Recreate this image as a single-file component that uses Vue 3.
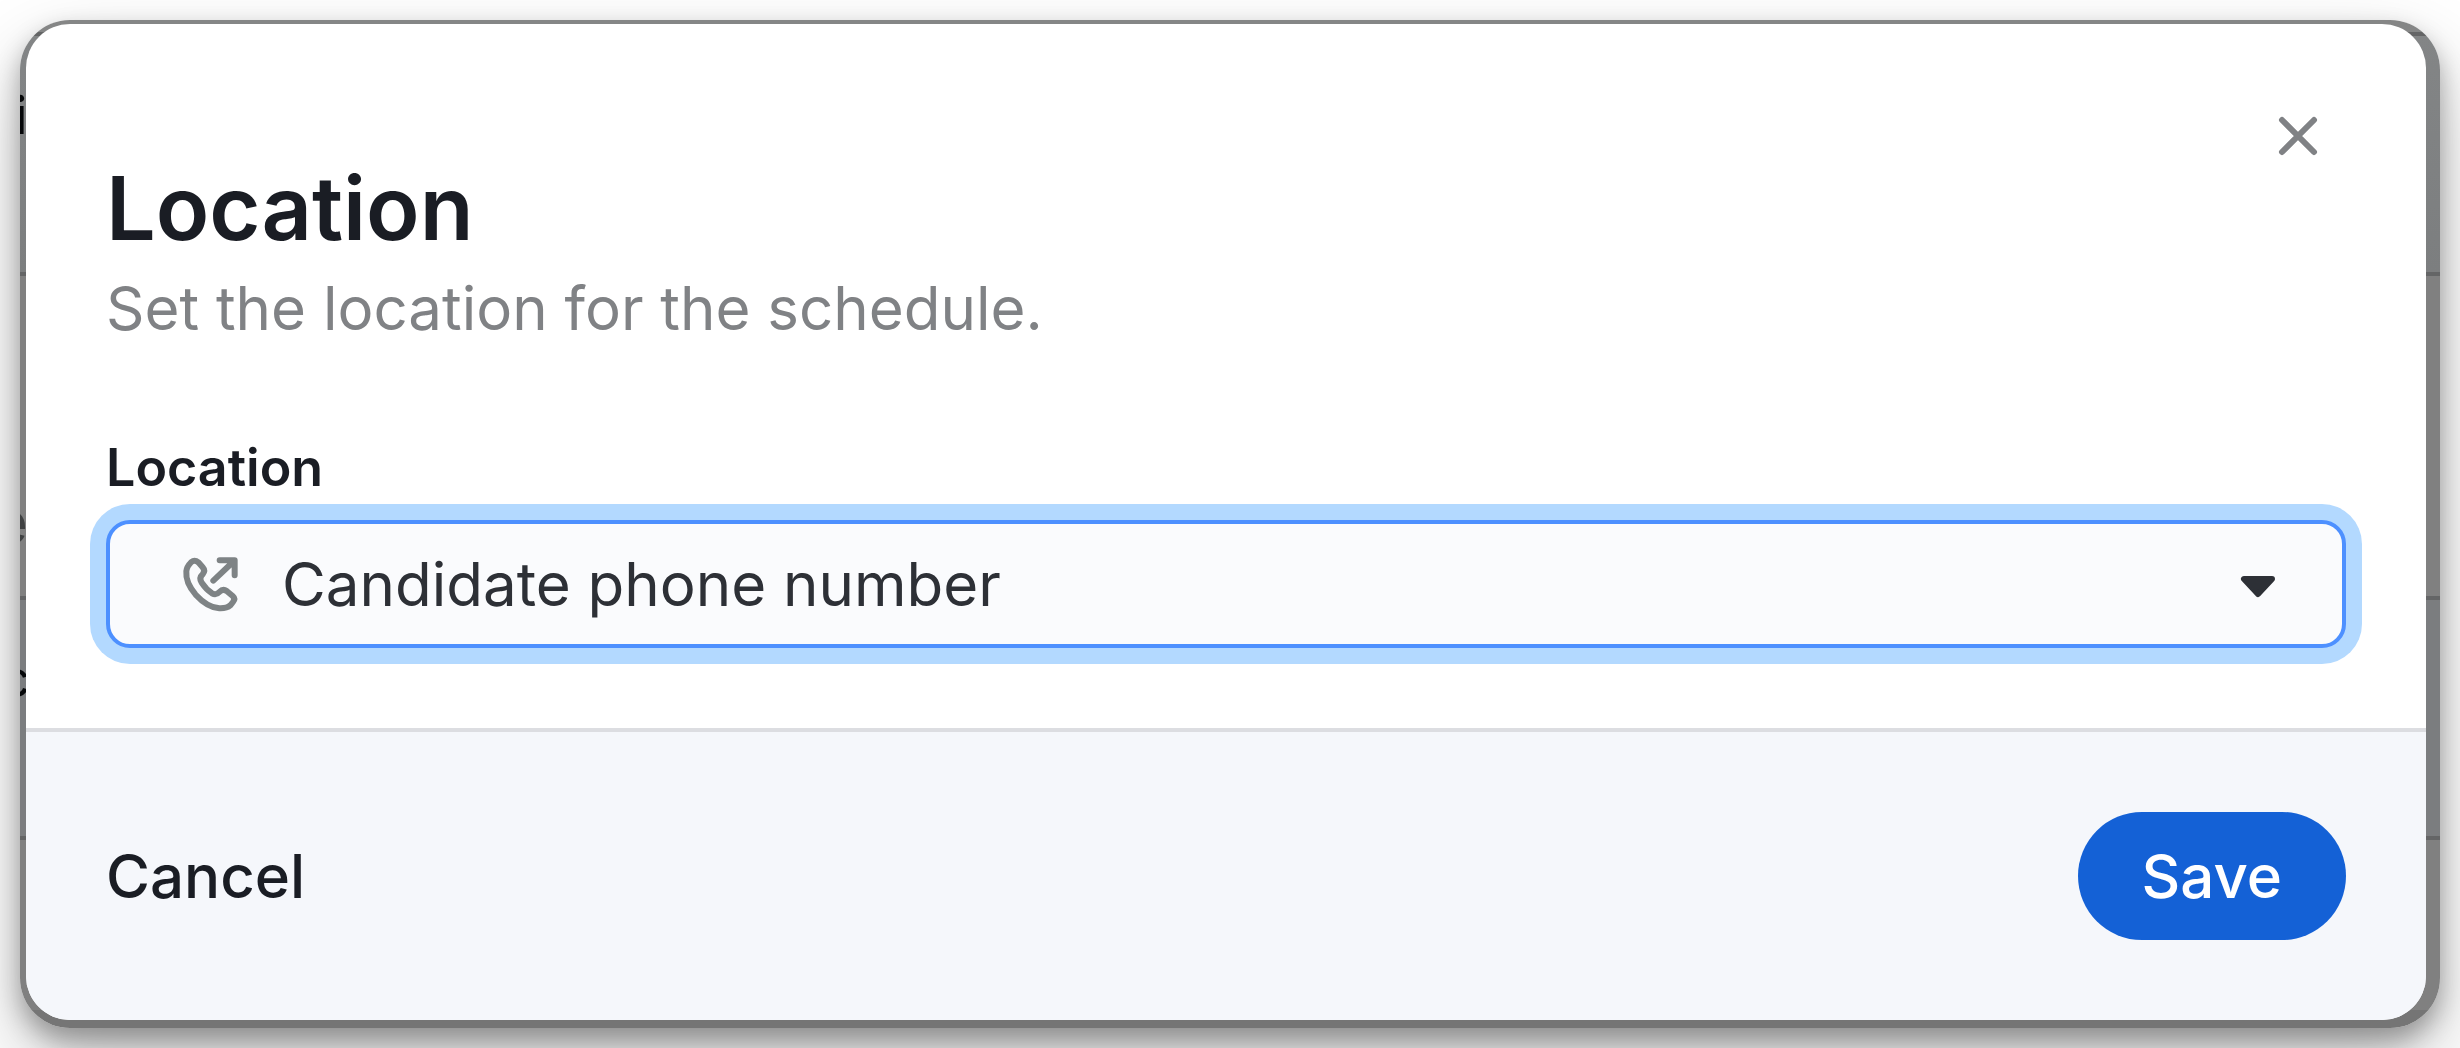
<script setup>
import { ref } from 'vue'

const location = ref('phone')
</script>

<template>
  <div class="page">
    <div class="window">
      <div class="underlay" aria-hidden="true">
        <span class="scrap scrap-title">i</span>
        <span class="scrap scrap-hint">e</span>
        <span class="scrap scrap-value">c</span>
      </div>

      <form class="dialog" role="dialog" aria-labelledby="dialog-title" @submit.prevent>
        <div class="body">
          <header class="header">
            <div class="heading">
              <h1 id="dialog-title" class="title">Location</h1>
              <p class="subtitle">Set the location for the schedule.</p>
            </div>
            <button class="close" type="button" aria-label="Close">
              <svg viewBox="0 0 48 48" width="48" height="48" fill="none" stroke="currentColor" stroke-width="6" stroke-linecap="round">
                <path d="M8 8 40 40M40 8 8 40" />
              </svg>
            </button>
          </header>

          <label class="label" for="location">Location</label>
          <div class="field">
            <svg class="phone" viewBox="60 36 192 192" width="64" height="64" fill="none" stroke="currentColor" stroke-width="18" stroke-linecap="round" stroke-linejoin="round">
              <path d="M94 66 Q104 58 115 67 L128 82 Q137 92 128 103 Q116 114 125 128 Q138 148 156 160 Q168 167 178 156 Q189 145 200 153 L218 168 Q227 176 219 186 L211 196 Q200 206 178 205 Q142 202 107 164 Q76 128 79 94 Q80 80 94 66Z" />
              <path d="M160 122 222 63M179 61H224V106" />
              <path d="M200 60H225V85Z" fill="currentColor" stroke="none" />
            </svg>
            <select id="location" v-model="location" class="select">
              <option value="phone">Candidate phone number</option>
            </select>
            <svg class="caret" viewBox="0 0 48 48" width="48" height="48" fill="currentColor" stroke="currentColor" stroke-width="6" stroke-linejoin="round">
              <path d="M10 19H38L24 34Z" />
            </svg>
          </div>
        </div>

        <footer class="footer">
          <button class="cancel" type="button">Cancel</button>
          <button class="save" type="submit">Save</button>
        </footer>
      </form>
    </div>
  </div>
</template>

<style>
body {
  margin: 0;
  background: #fff;
}
</style>

<style scoped>
.page {
  padding: 20px;
  overflow: hidden;
  font-family: Inter, "Liberation Sans", sans-serif;
  color: #1a1d24;
}

.window {
  position: relative;
  padding: 4px 14px 8px 6px;
  border-radius: 50px;
  box-shadow: 0 12px 24px rgba(0, 0, 0, 0.3), 0 36px 80px rgba(0, 0, 0, 0.24);
}

.underlay {
  position: absolute;
  inset: 0;
  overflow: hidden;
  border-radius: 50px;
  background: linear-gradient(
    #858686 12px, #646566 12px 16px,
    #838586 16px, #7c7e7f 252px,
    #646566 252px 256px, #808080 256px 576px,
    #646566 576px 580px, #7b7d7f 580px 816px,
    #646566 816px 820px, #808080 820px 990px,
    #757575 990px
  );
}

.scrap {
  position: absolute;
  color: #050709;
  font-size: 52px;
  line-height: 60px;
}

.scrap-title {
  top: 66px;
  right: calc(100% - 7px);
  font-weight: 600;
}

.scrap-hint {
  top: 472px;
  right: calc(100% - 8px);
  color: #3f4142;
  font-size: 60px;
}

.scrap-value {
  top: 629px;
  right: calc(100% - 10px);
}

.dialog {
  position: relative;
  overflow: hidden;
  border-radius: 44px;
  background: #fff;
}

.body {
  padding: 64px 80px 80px;
}

.header {
  display: flex;
  align-items: flex-start;
  justify-content: space-between;
  margin-bottom: 76px;
}

.heading {
  padding-top: 66px;
}

.title {
  margin: 0;
  font-size: 88px;
  font-weight: 600;
  line-height: 108px;
}

.subtitle {
  margin: 0;
  font-size: 60px;
  line-height: 92px;
  color: #808285;
}

button {
  padding: 0;
  border: 0;
  background: none;
  color: inherit;
  font: inherit;
  cursor: pointer;
}

.close {
  display: flex;
  align-items: center;
  justify-content: center;
  width: 96px;
  height: 96px;
  color: #808285;
}

.label {
  display: block;
  margin-bottom: 14px;
  font-size: 52px;
  font-weight: 600;
  line-height: 76px;
}

.field {
  display: flex;
  align-items: center;
  gap: 38px;
  height: 120px;
  padding: 0 60px 0 70px;
  border: 4px solid #4d90ff;
  border-radius: 24px;
  background: #fafbfd;
  box-shadow: 0 0 0 16px #b3d9ff;
}

.phone {
  flex: none;
  color: #7e8385;
}

.caret {
  flex: none;
  color: #2d3036;
  pointer-events: none;
}

.select {
  flex: 1;
  min-width: 0;
  height: 120px;
  padding: 0;
  border: 0;
  outline: 0;
  appearance: none;
  background: none;
  color: #2d3036;
  font-family: inherit;
  font-size: 60px;
}

.footer {
  display: flex;
  align-items: center;
  justify-content: space-between;
  padding: 80px;
  border-top: 4px solid #dcdde1;
  background: #f5f7fb;
}

.cancel,
.save {
  height: 128px;
  font-size: 60px;
  font-weight: 500;
}

.save {
  padding: 0 64px;
  border-radius: 64px;
  background: #1461d6;
  color: #fff;
}
</style>
